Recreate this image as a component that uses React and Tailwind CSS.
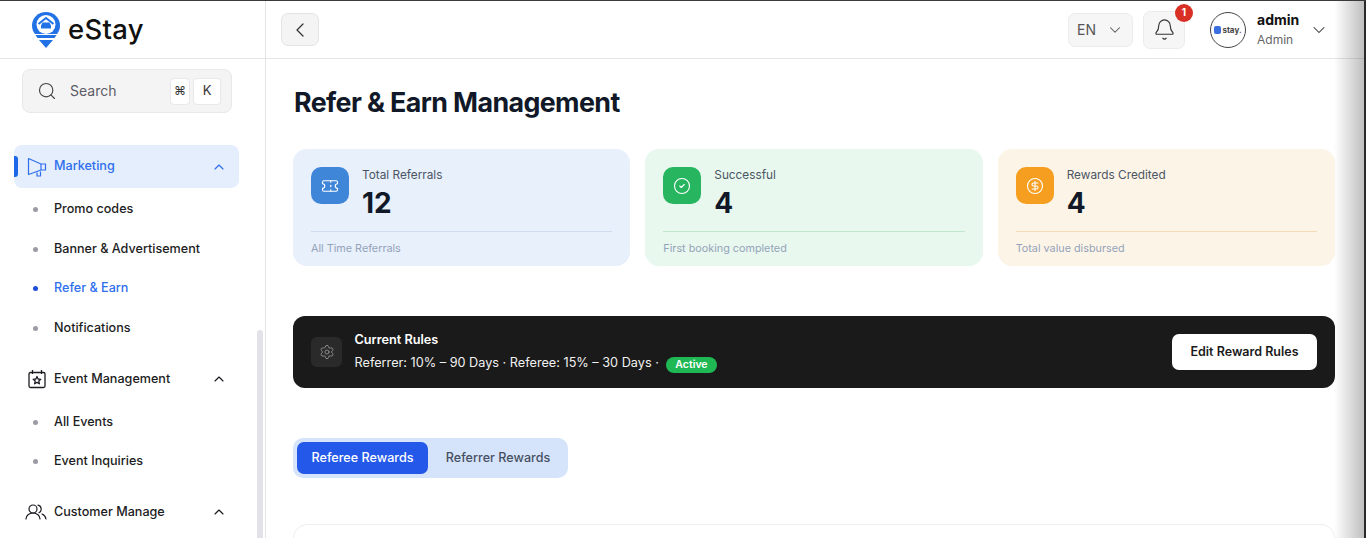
import React from "react";
import { Search, ChevronUp, ChevronDown, ChevronLeft, Bell, Ticket, CircleCheck, CircleDollarSign, Settings } from "lucide-react";

const font = { fontFamily: "Inter, sans-serif" };

function SubItem({ label, active }) {
  return (
    <div className="flex h-[39.5px] items-center pl-[33px]">
      <span className={`h-[5px] w-[5px] rounded-full ${active ? "bg-[#1d4ed8]" : "bg-[#9b9ba5]"}`} />
      <span className={`ml-[16px] text-[12.6px] font-medium ${active ? "text-[#2f6fed]" : "text-[#1c1c22]"}`}>{label}</span>
    </div>
  );
}

function Logo() {
  return (
    <svg width="28" height="36" viewBox="0 0 28 36" fill="none">
      <path d="M14 0C6 0 0 6 0 13.500c0 3.500 1.200 6.500 3 8.500h22c1.800-2 3-5 3-8.500C28 6 22 0 14 0z" fill="#2272e6" />
      <circle cx="14" cy="12.500" r="9.500" fill="#fff" />
      <path d="M6.500 12l7.500-6 7.500 6" stroke="#2272e6" strokeWidth="2" fill="none" />
      <path d="M9 16.500v-3l1.500-3h7l1.500 3v3z" fill="#2272e6" />
      <path d="M3.500 23h21l-2 3h-17z" fill="#2272e6" />
      <path d="M7 28h14l-7 8z" fill="#2272e6" />
    </svg>
  );
}

function MegaphoneIcon() {
  return (
    <svg width="20" height="20" viewBox="0 0 20 20" fill="none" stroke="currentColor" strokeWidth="1.200" strokeLinejoin="round">
      <path d="M1.500 1.500L14 7h4.500v6H14L1.500 17.500z" />
      <path d="M14 7v6" />
      <path d="M10 15.500V19h3.500v-4.500" />
    </svg>
  );
}

function CalendarStarIcon() {
  return (
    <svg width="20" height="20" viewBox="0 0 20 20" fill="none" stroke="currentColor" strokeWidth="1.300" strokeLinejoin="round">
      <rect x="2" y="3.500" width="16" height="15" rx="1.500" />
      <path d="M5.500 1v4M14.500 1v4" />
      <path d="M10 7.500l1.100 2.500 2.700.3-2 1.800.6 2.700-2.400-1.400-2.400 1.400.6-2.700-2-1.800 2.700-.3z" />
    </svg>
  );
}

function PeopleIcon() {
  return (
    <svg width="22" height="16" viewBox="0 0 22 16" fill="none" stroke="currentColor" strokeWidth="1.200" strokeLinecap="round">
      <circle cx="8" cy="5" r="4" />
      <path d="M1 15c0-3.500 3-6 7-6s7 2.500 7 6" />
      <path d="M13 1.200a4 4 0 0 1 1 7.500" />
      <path d="M17 10c2 .8 3.500 2.500 4 5" />
    </svg>
  );
}

function StatCard({ bg, iconBg, line, icon: Icon, title, value, foot }) {
  return (
    <div className={`flex-1 rounded-[14px] px-[18px] pt-[18px] ${bg}`}>
      <div className="flex gap-[13px]">
        <div className={`flex h-[37px] w-[38px] items-center justify-center rounded-[10px] ${iconBg}`}>
          <Icon size={18} strokeWidth={1.5} className="text-white" />
        </div>
        <div>
          <div className="text-[11.8px] leading-[16px] text-[#4b5563]">{title}</div>
          <div className="mt-[4px] text-[28px] font-bold leading-[32px] text-[#111827]">{value}</div>
        </div>
      </div>
      <div className={`mt-[12px] border-t pb-[10px] pt-[10px] text-[10.8px] leading-[14px] text-[#94a3b8] ${line}`}>{foot}</div>
    </div>
  );
}

export default function App() {
  return (
    <div style={font} className="relative flex h-[538px] w-[1366px] overflow-hidden border-t border-[#3a3a3a] bg-white">
      <aside className="relative h-full w-[266px] shrink-0 border-r border-[#e5e5e7]">
        <div className="flex h-[58px] items-center border-b border-[#e5e5e7] pl-[32px]">
          <Logo />
          <span className="ml-[8px] text-[27.5px] font-medium leading-none tracking-[0.3px] text-[#111]">eStay</span>
        </div>
        <div className="ml-[22px] mt-[10px] flex h-[44px] w-[210px] items-center rounded-[8px] border border-[#e8e8ea] bg-[#f4f4f5] pl-[14px] pr-[10px]">
          <Search size={20} strokeWidth={1.4} className="text-[#444]" />
          <span className="mb-[1px] ml-[13px] flex-1 text-[14px] text-[#5c5c66]">Search</span>
          <span className="flex h-[27px] w-[20px] items-center justify-center rounded-[4px] border border-[#e8e8ea] bg-white text-[12px] text-[#333]">⌘</span>
          <span className="ml-[3px] flex h-[27px] w-[28px] items-center justify-center rounded-[4px] border border-[#e8e8ea] bg-white text-[13px] text-[#333]">K</span>
        </div>
        <div className="relative mx-[14px] mt-[32px] flex h-[43px] w-[225px] items-center rounded-[8px] bg-[#e4eefc] pl-[13px] pr-[12px] text-[#2f6fed]">
          <span className="absolute left-0 top-[11px] h-[21px] w-[4px] rounded-r-[3px] bg-[#1d68e8]" />
          <MegaphoneIcon />
          <span className="mb-[1px] ml-[7px] flex-1 text-[12.6px] font-medium">Marketing</span>
          <ChevronUp size={16} strokeWidth={1.75} />
        </div>
        <div className="mt-[2px]">
          <SubItem label="Promo codes" />
          <SubItem label="Banner & Advertisement" />
          <SubItem label="Refer & Earn" active />
          <SubItem label="Notifications" />
        </div>
        <div className="mx-[14px] mt-[9.5px] flex h-[43px] w-[225px] items-center pl-[13px] pr-[12px] text-[#1c1c22]">
          <CalendarStarIcon />
          <span className="ml-[7px] flex-1 text-[12.6px] font-medium">Event Management</span>
          <ChevronUp size={16} strokeWidth={1.75} />
        </div>
        <div className="mt-[2px]">
          <SubItem label="All Events" />
          <SubItem label="Event Inquiries" />
        </div>
        <div className="mx-[14px] mt-[9px] flex h-[43px] w-[225px] items-center pl-[11px] pr-[12px] text-[#1c1c22]">
          <PeopleIcon />
          <span className="ml-[7px] flex-1 text-[12.6px] font-medium">Customer Manage</span>
          <ChevronUp size={16} strokeWidth={1.75} />
        </div>
        <div className="absolute bottom-0 left-[257px] top-[329px] w-[6px] rounded-t-[3px] bg-[#e2e2e8]" />
      </aside>

      <div className="flex-1">
        <header className="flex h-[58px] items-center border-b border-[#e5e5e7] pl-[15px] pr-[37px]">
          <button className="flex h-[33px] w-[38px] items-center justify-center rounded-[7px] border border-[#e4e4e7] bg-[#f4f4f5] text-[#333]">
            <ChevronLeft size={24} strokeWidth={1.25} />
          </button>
          <div className="ml-auto flex h-[34px] w-[65px] items-center justify-between rounded-[7px] border border-[#ececee] bg-[#f6f6f7] pl-[8px] pr-[8px] text-[14px] text-[#555]">
            EN
            <ChevronDown size={18} strokeWidth={1.4} />
          </div>
          <div className="relative ml-[10px] flex h-[38px] w-[42px] items-center justify-center rounded-[7px] border border-[#ececee] bg-[#f6f6f7] text-[#333]">
            <Bell size={23} strokeWidth={1.2} />
            <span className="absolute right-[-9px] top-[-8px] flex h-[18px] w-[18px] items-center justify-center rounded-full bg-[#d93025] text-[10px] font-bold text-white">1</span>
          </div>
          <div className="ml-[25px] flex h-[36px] w-[36px] items-center justify-center rounded-full border border-[#444] bg-white">
            <span className="flex items-center text-[8px] font-bold leading-none text-[#444]">
              <span className="mr-[1px] h-[8px] w-[7px] rounded-[2px] bg-[#3b6fe0]" />
              stay.
            </span>
          </div>
          <div className="ml-[11px] w-[55px]">
            <div className="text-[14px] font-bold leading-[20px] text-[#111]">admin</div>
            <div className="text-[12px] leading-[19px] text-[#666]">Admin</div>
          </div>
          <ChevronDown size={20} strokeWidth={1.25} className="ml-[-3px] text-[#333]" />
        </header>

        <main className="pl-[27px] pr-[31px]">
          <h1 className="ml-[1px] mt-[25px] text-[26.8px] font-bold leading-[36px] tracking-[-0.6px] text-[#111827]">Refer &amp; Earn Management</h1>
          <div className="mt-[29px] flex gap-[15px]">
            <StatCard bg="bg-[#e8f0fc]" iconBg="bg-[#3f85d8]" line="border-[#cfdcee]" icon={Ticket} title="Total Referrals" value="12" foot="All Time Referrals" />
            <StatCard bg="bg-[#e8f8ef]" iconBg="bg-[#27b560]" line="border-[#c3e6cf]" icon={CircleCheck} title="Successful" value="4" foot="First booking completed" />
            <StatCard bg="bg-[#fdf4e8]" iconBg="bg-[#f59e1f]" line="border-[#f3dcb4]" icon={CircleDollarSign} title="Rewards Credited" value="4" foot="Total value disbursed" />
          </div>
          <div className="mt-[50px] flex h-[72px] items-center rounded-[12px] bg-[#1a1a1a] pl-[18px] pr-[18px]">
            <div className="flex h-[30px] w-[31px] items-center justify-center rounded-[6px] bg-[#2a2a2a]">
              <Settings size={16} strokeWidth={1.25} className="text-[#9a9a9a]" />
            </div>
            <div className="ml-[12.5px] flex-1">
              <div className="text-[12.7px] font-semibold leading-[16px] text-white">Current Rules</div>
              <div className="mt-[6px] flex items-center text-[12.7px] leading-[16px] text-[#f1f1f1]">
                Referrer: 10% – 90 Days · Referee: 15% – 30 Days ·
                <span className="ml-[7px] mt-[3px] rounded-full bg-[#1fb855] px-[9.500px] text-[10.5px] font-semibold leading-[16px] text-white">Active</span>
              </div>
            </div>
            <button className="h-[36px] w-[145px] rounded-[7px] bg-white text-[12.5px] font-semibold text-[#1a1a1a]">Edit Reward Rules</button>
          </div>
          <div className="mt-[50px] flex h-[40px] w-[275px] items-center rounded-[10px] bg-[#d5e4fb] pl-[4px]">
            <span className="flex h-[32px] w-[131px] items-center justify-center rounded-[7px] bg-[#2358e8] text-[12.6px] font-medium text-white">Referee Rewards</span>
            <span className="flex-1 text-center text-[12.6px] font-medium text-[#475063]">Referrer Rewards</span>
          </div>
          <div className="mt-[46px] h-[40px] rounded-t-[14px] border border-[#eeeeef]" />
        </main>
      </div>
      <div className="pointer-events-none absolute bottom-0 right-[2px] top-0 w-[30px] bg-gradient-to-r from-transparent to-black/25" />
      <div className="absolute bottom-0 right-0 top-0 w-[2px] bg-[#2b2b2b]" />
    </div>
  );
}
